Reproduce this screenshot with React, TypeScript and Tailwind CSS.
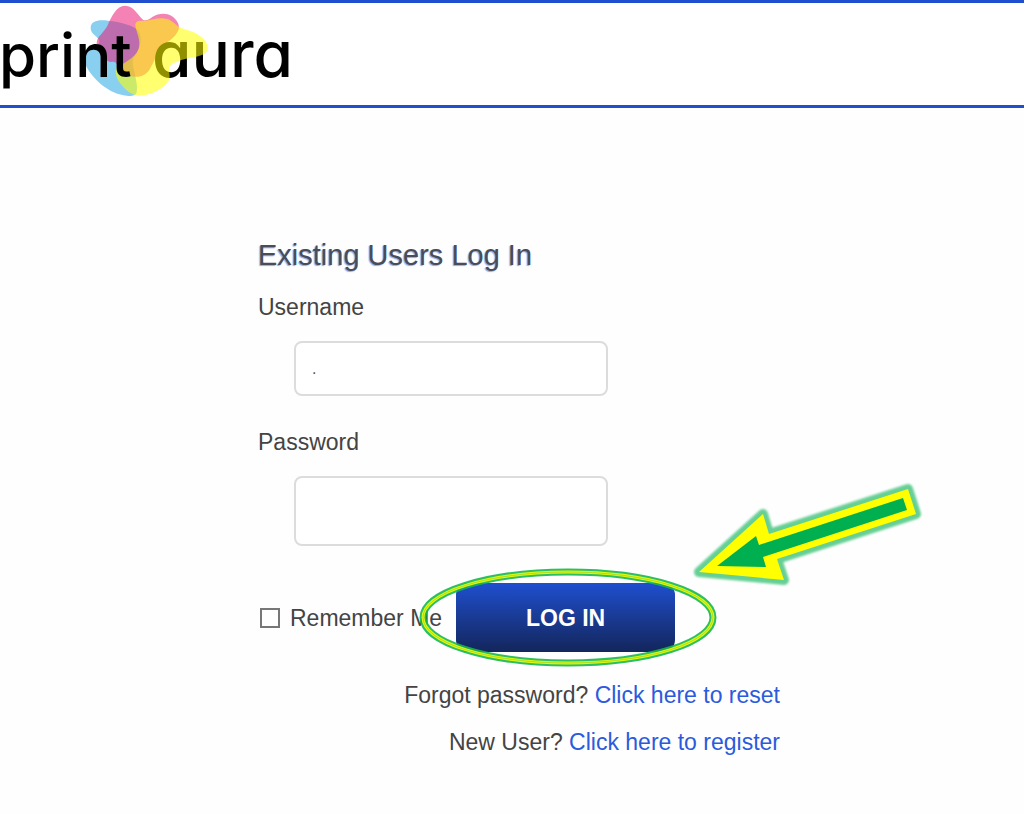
import { useState } from 'react';

function Logo() {
  return (
    <svg width="300" height="102" viewBox="0 3 300 102" role="img" aria-label="print aura">
      <g transform="scale(0.3333)">
        <path
          d="M272 82C274 62 295 58 325 62C360 66 400 76 415 92C428 112 424 145 400 175C392 195 414 240 411 270C410 284 404 290 380 287C330 284 282 240 262 205C252 186 250 164 262 155C276 146 296 144 298 125C298 110 270 104 272 82Z"
          fill="#89d0f0"
        />
        <path
          d="M290 130C290 110 310 100 322 78C335 48 350 17 375 17C402 18 410 42 430 60C440 64 450 56 458 50C475 40 498 38 515 48C530 58 538 72 537 85C534 105 508 122 488 140C470 156 466 180 450 206C440 224 422 232 404 230C380 228 368 212 354 200C346 182 342 186 332 186C312 184 290 156 290 130Z"
          fill="#ec1371"
          fillOpacity="0.53"
        />
      </g>
      <text
        x="152"
        y="77"
        fontSize="64"
        fontWeight="500"
        fontFamily="Inter, 'Liberation Sans', sans-serif"
        style={{ fontFeatureSettings: '"cv11"' }}
      >
        aura
      </text>
      <g transform="scale(0.3333)">
        <path
          d="M406 75C407 60 420 62 438 62C460 58 480 50 505 58C525 68 532 82 550 86C590 96 622 116 624 143C624 160 606 166 588 170C558 176 520 182 508 200C504 216 514 226 506 242C488 268 450 288 412 287C388 282 368 262 354 240C346 222 345 210 350 203C366 190 404 178 416 146C424 120 408 96 406 75Z"
          fill="#ffff00"
          fillOpacity="0.56"
        />
      </g>
      <text
        x="-1"
        y="77"
        fontSize="60"
        fontWeight="500"
        fontFamily="Inter, 'Liberation Sans', sans-serif"
      >
        print
      </text>
    </svg>
  );
}

function Highlight() {
  return (
    <svg
      className="pointer-events-none absolute -top-27 -left-10 max-w-none"
      width="514"
      height="196"
      viewBox="416 475 514 196"
      aria-hidden="true"
    >
      <defs>
        <filter id="glow" x="-10%" y="-20%" width="120%" height="140%">
          <feGaussianBlur stdDeviation="1.3" />
        </filter>
      </defs>
      <g fill="none">
        <ellipse cx="568" cy="617.5" rx="145" ry="45.5" stroke="#14b850" strokeWidth="7" strokeOpacity="0.9" />
        <ellipse cx="568" cy="617.5" rx="145" ry="45.5" stroke="#e0f810" strokeWidth="3" />
        <ellipse cx="568" cy="617.5" rx="145" ry="45.5" stroke="#b4dc1c" strokeWidth="1" />
      </g>
      <path
        d="M699 572L763 514L769 534L908 489L916 514L777 559L784 580Z"
        fill="#00b050"
        stroke="#00b050"
        strokeWidth="10"
        strokeLinejoin="round"
        opacity="0.6"
        filter="url(#glow)"
      />
      <path d="M699 572L763 514L769 534L908 489L916 514L777 559L784 580Z" fill="#ffff00" />
      <path d="M717 566L756 536L759 545L903 498L907 510L763 557L766 567Z" fill="#00b050" />
    </svg>
  );
}

export default function App() {
  const [username, setUsername] = useState('.');
  const [password, setPassword] = useState('');
  const [remember, setRemember] = useState(false);

  return (
    <div className="min-h-screen bg-[#fefefe] font-['Liberation_Sans',Arial,sans-serif] text-[23px] leading-7 text-[#444]">
      {/* Header */}
      <header className="border-y-3 border-[#1f4fcf] bg-white">
        <a href="#" className="inline-block align-top">
          <Logo />
        </a>
      </header>

      {/* Login Form */}
      <main className="mx-auto max-w-[536px] pt-[129px] pb-8 pl-[14px]">
        <form onSubmit={(e) => e.preventDefault()}>
          <h1 className="text-[29px] leading-9 text-[#4a4d58] [text-shadow:-1px_1px_1px_#8fa8ee]">
            Existing Users Log In
          </h1>

          <label htmlFor="username" className="mt-5 block">Username</label>
          <input
            id="username"
            type="text"
            value={username}
            onChange={(e) => setUsername(e.target.value)}
            className="mt-5 ml-9 block h-[55px] w-[314px] rounded-lg border-2 border-[#dcdcdc] bg-white px-4 text-base text-[#555]"
          />

          <label htmlFor="password" className="mt-8 block">Password</label>
          <input
            id="password"
            type="password"
            value={password}
            onChange={(e) => setPassword(e.target.value)}
            className="mt-5 ml-9 block h-[70px] w-[314px] rounded-lg border-2 border-[#dcdcdc] bg-white px-4 text-base text-[#555]"
          />

          {/* Remember Me + Submit */}
          <div className="mt-[37px] flex items-center gap-3.5">
            <label className="flex items-center gap-2.5 whitespace-nowrap">
              <input
                type="checkbox"
                checked={remember}
                onChange={(e) => setRemember(e.target.checked)}
                className="ml-0.5 size-5 appearance-none border-2 border-[#777] bg-white checked:bg-[#1f4fcf]"
              />
              Remember Me
            </label>
            <div className="relative">
              <button
                type="submit"
                className="block h-[69px] w-[219px] rounded-xl bg-linear-to-b from-[#1f4fd0] to-[#13265c] font-bold text-white"
              >
                LOG IN
              </button>
              <Highlight />
            </div>
          </div>
        </form>

        {/* Links */}
        <div className="mt-[29px] space-y-[19px] text-right">
          <p>
            Forgot password? <a href="#reset" className="text-[#2b5bdc]">Click here to reset</a>
          </p>
          <p>
            New User? <a href="#register" className="text-[#2b5bdc]">Click here to register</a>
          </p>
        </div>
      </main>
    </div>
  );
}
